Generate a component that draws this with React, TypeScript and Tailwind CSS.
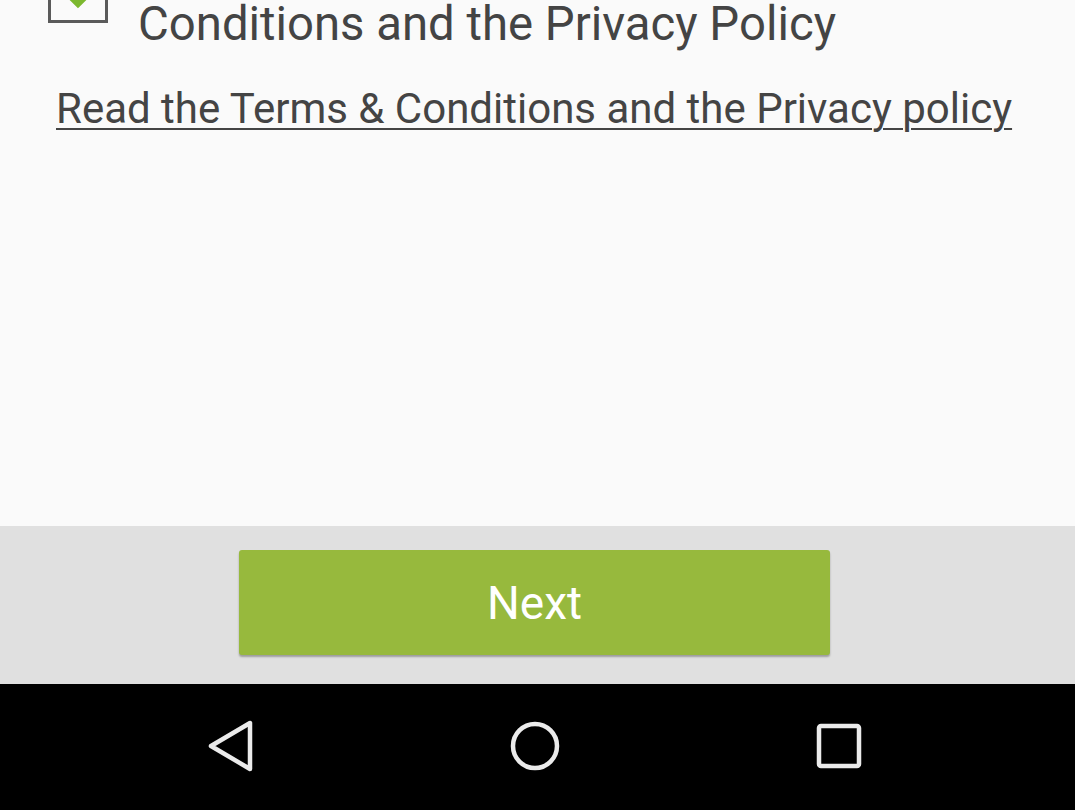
import { ReactNode } from "react";

const font = { fontFamily: "Roboto, 'Noto Sans', sans-serif" };

const NavButton = ({ children }: { children: ReactNode }) => (
  <div className="w-[60px] h-[60px] flex items-center justify-center">{children}</div>
);

export default function App() {
  return (
    <div className="w-[1075px] h-[810px] flex flex-col overflow-hidden" style={font}>
      <div className="h-[526px] bg-[#fafafa] flex flex-col">
        <div className="flex items-start h-[48px]">
          <div className="ml-[48px] mt-[-37px] w-[60px] h-[60px] border-[3px] border-[#5a5a5a] flex items-end justify-center">
            <svg width="40" height="30" viewBox="0 0 40 30" className="mb-[10px]">
              <path d="M6 8 L20 22 L34 8" fill="none" stroke="#7cb82f" strokeWidth="9" />
            </svg>
          </div>
          <p className="ml-[30px] text-[47.3px] leading-[48px] text-[#444444] whitespace-nowrap">
            Conditions and the Privacy Policy
          </p>
        </div>
        <p className="mt-[40px] ml-[56px] text-[42px] leading-[42px] text-[#444444] underline decoration-[2px] underline-offset-[5px] whitespace-nowrap">
          Read the Terms &amp; Conditions and the Privacy policy
        </p>
      </div>

      <div className="h-[158px] bg-[#e0e0e0] flex pt-[24px]">
        <button className="ml-[239px] w-[591px] h-[105px] bg-[#97b93d] rounded-[3px] shadow-[0_2px_2px_rgba(0,0,0,0.3)] text-white text-[46px] leading-none flex items-center justify-center">
          Next
        </button>
      </div>

      <div className="flex-1 bg-black flex items-center pl-[201px] gap-[244px] pb-[2px]">
        <NavButton>
          <svg width="50" height="52" viewBox="0 0 50 52">
            <path
              d="M44 3 L44 49 L5 26 Z"
              fill="none"
              stroke="#ebebeb"
              strokeWidth="4.5"
              strokeLinejoin="round"
            />
          </svg>
        </NavButton>
        <NavButton>
          <svg width="52" height="52" viewBox="0 0 52 52">
            <circle cx="26" cy="26" r="22" fill="none" stroke="#ebebeb" strokeWidth="4.5" />
          </svg>
        </NavButton>
        <NavButton>
          <svg width="46" height="46" viewBox="0 0 46 46">
            <rect x="3" y="3" width="40" height="40" rx="2" fill="none" stroke="#ebebeb" strokeWidth="4.5" />
          </svg>
        </NavButton>
      </div>
    </div>
  );
}
